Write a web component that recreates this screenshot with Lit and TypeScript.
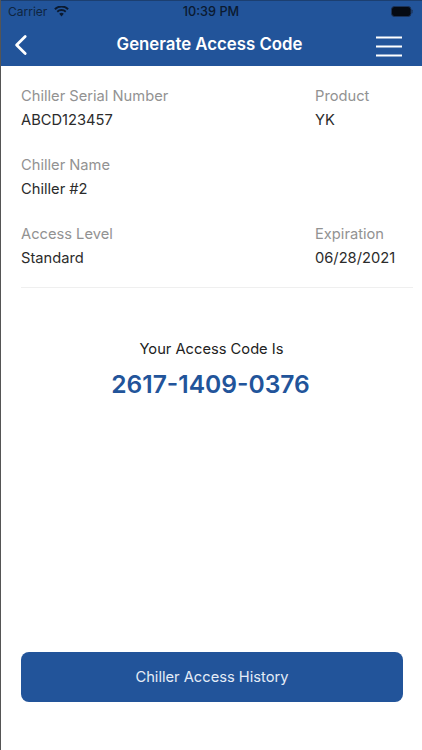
import { LitElement, html, css } from "lit";
import { customElement } from "lit/decorators.js";

@customElement("app-root")
export class AppRoot extends LitElement {
  static styles = css`
    :host { display: block; width: 422px; height: 750px; overflow: hidden; background: #fff; font-family: Inter, "Liberation Sans", sans-serif; }
    .page { box-sizing: border-box; height: 750px; display: flex; flex-direction: column; border-left: 1px solid #555; background: #fff; }
    .header { height: 66px; flex: none; background: #22549a; color: #fff; display: flex; flex-direction: column; border-top: 1px solid #1c3f70; box-sizing: border-box; }
    .status { height: 21px; position: relative; display: flex; align-items: center; padding: 0 9px 0 7px; color: #0b1a30; font-size: 12px; flex: none; }
    .carrier { color: #0f2540; margin-right: 7px; }
    .time { position: absolute; left: 0; right: 0; text-align: center; font-weight: 500; font-size: 12.7px; padding-right: 1px; }
    .battery { margin-left: auto; display: block; }
    .nav { flex: 1; display: flex; align-items: center; justify-content: space-between; padding: 0 20px 0 13px; margin-top: 1px; }
    .title { font-size: 16.8px; font-weight: 600; margin-left: 15px; margin-top: -1px; }
    .back { display: block; }
    .menu { display: block; margin-top: 4px; }
    .content { flex: 1; display: flex; flex-direction: column; padding: 20px 9px 48px 20px; }
    .row { display: flex; justify-content: space-between; height: 69px; }
    .row .right { width: 98px; }
    .label { font-size: 14.7px; color: #929292; line-height: 20px; }
    .value { font-size: 14.7px; color: #2b2b2b; line-height: 20px; margin-top: 4px; }
    hr { border: 0; border-top: 1px solid #efefef; margin: -6px 0 0; }
    .code-box { display: flex; flex-direction: column; align-items: center; margin-top: 51px; padding-right: 11px; }
    .code-label { font-size: 14.7px; color: #222; line-height: 20px; }
    .code { font-size: 24.6px; font-weight: 600; color: #22549a; line-height: 30px; margin-top: 10px; padding-right: 2px; }
    .btn { margin-top: auto; margin-right: 10px; height: 50px; flex: none; border-radius: 8px; background: #22549a; color: #e4ecf7; border: 0; font: inherit; font-size: 14.7px; width: 382px; padding: 0; }
  `;

  render() {
    return html`
      <div class="page">
        <div class="header">
          <div class="status">
            <span class="carrier">Carrier</span>
            <svg width="15" height="11" viewBox="0 0 15 11"><path d="M7.5 10.5 L5.2 7.8 A3.4 3.4 0 0 1 9.8 7.8 Z M3.9 6.4 L2.6 5 A7 7 0 0 1 12.4 5 L11.1 6.4 A5.2 5.2 0 0 0 3.9 6.4 Z M1.6 3.9 L.2 2.5 A10.4 10.4 0 0 1 14.8 2.5 L13.4 3.9 A8.5 8.5 0 0 0 1.6 3.9 Z" fill="#0b1a30"/></svg>
            <span class="time">10:39 PM</span>
            <svg class="battery" width="22" height="11" viewBox="0 0 22 11"><rect x=".5" y=".5" width="19.5" height="10" rx="3" fill="#050a12" stroke="#1c3358"/><rect x="20.6" y="3.8" width="1" height="3.4" rx=".5" fill="#1c3358"/></svg>
          </div>
          <div class="nav">
            <svg class="back" width="14" height="22" viewBox="0 0 14 22"><path d="M11.2 2.5 L2.6 11 L11.2 19.5" fill="none" stroke="#fff" stroke-width="2.8" stroke-linecap="round" stroke-linejoin="round"/></svg>
            <div class="title">Generate Access Code</div>
            <svg class="menu" width="26" height="21" viewBox="0 0 26 21"><path d="M0 1.5H26M0 10.5H26M0 19.5H26" stroke="#fff" stroke-width="2.2"/></svg>
          </div>
        </div>
        <div class="content">
          <div class="row">
            <div><div class="label">Chiller Serial Number</div><div class="value">ABCD123457</div></div>
            <div class="right"><div class="label">Product</div><div class="value">YK</div></div>
          </div>
          <div class="row">
            <div><div class="label">Chiller Name</div><div class="value">Chiller #2</div></div>
          </div>
          <div class="row">
            <div><div class="label">Access Level</div><div class="value">Standard</div></div>
            <div class="right"><div class="label">Expiration</div><div class="value">06/28/2021</div></div>
          </div>
          <hr />
          <div class="code-box">
            <div class="code-label">Your Access Code Is</div>
            <div class="code">2617-1409-0376</div>
          </div>
          <button class="btn">Chiller Access History</button>
        </div>
      </div>
    `;
  }
}
